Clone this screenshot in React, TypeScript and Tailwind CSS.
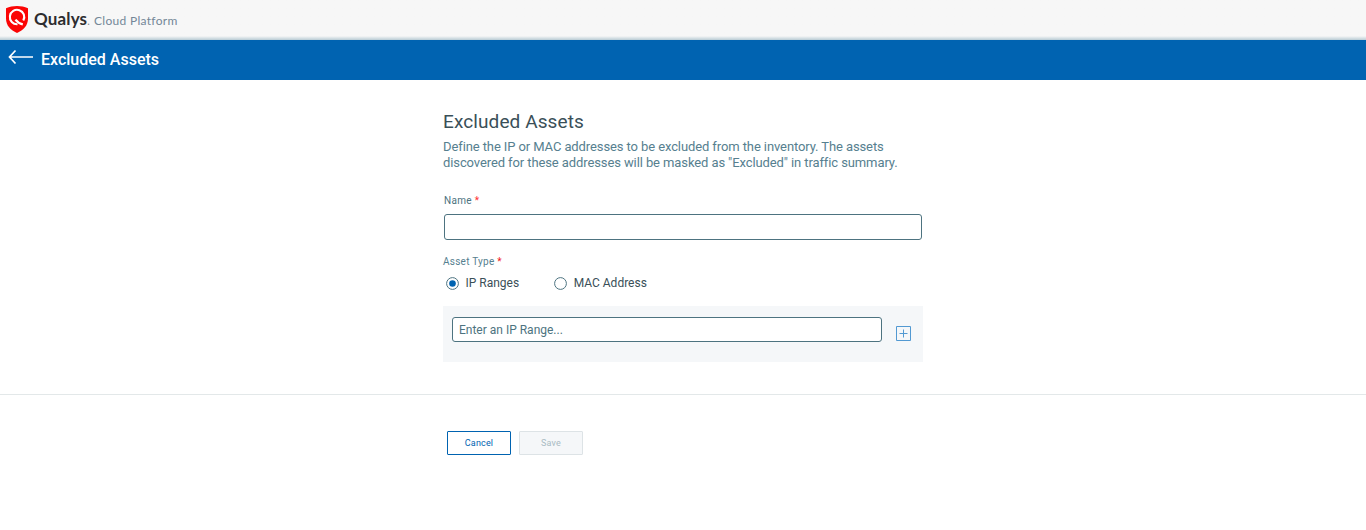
import { useState } from "react";

function QualysMark() {
  return (
    <svg width="24" height="28" viewBox="0 0 24 28" className="mt-px block" aria-hidden="true">
      <path
        d="M1 2.200C4.500 .7 8 0 12 0s7.500 .7 11 2.200V12.500c0 7-4.500 11.500-11 14.600C5.500 24 1 19.500 1 12.500Z"
        fill="#fb0505"
      />
      <path
        d="M12.500 18.200A7.200 7.200 0 1 1 18.300 14.600"
        fill="none"
        stroke="#fff"
        strokeWidth="2.100"
      />
      <path d="M10.500 13.700c1.500 2.200 3.700 3.900 7.300 4.600" fill="none" stroke="#fff" strokeWidth="2.300" />
    </svg>
  );
}

function Radio({ label, checked, onChange }: { label: string; checked: boolean; onChange: () => void }) {
  return (
    <label className="flex h-4 cursor-pointer items-center text-[12px] leading-4 text-[#3a4f58]">
      <input type="radio" name="asset-type" checked={checked} onChange={onChange} className="sr-only" />
      <svg width="13" height="13" viewBox="0 0 13 13" className="mt-px mr-[6.500px] block">
        <circle cx="6.5" cy="6.500" r="5.900" fill="#fff" stroke="#4d7380" />
        {checked && <circle cx="6.500" cy="6.500" r="3.300" fill="#0063b1" />}
      </svg>
      {label}
    </label>
  );
}

export default function App() {
  const [type, setType] = useState("ip");
  return (
    <div className="h-[530px] w-full overflow-hidden bg-white font-['Roboto',sans-serif]">
      <header className="flex h-10 items-start bg-linear-to-b from-[#f7f7f7] from-90% to-[#b9ccd5] pt-[5px] pl-[5px]">
        <QualysMark />
        <div className="ml-[5px] flex items-baseline leading-7">
          <span className="w-[53px] font-['Lato',sans-serif] text-[17px] leading-7 font-bold tracking-[0.15px] text-[#2d2d2f]">
            Qualys
          </span>
          <span className="w-[7px] text-[12px] text-[#8c8c8c]">.</span>
          <span className="font-['Lato',sans-serif] text-[12px] tracking-[0.3px] text-[#748798]">Cloud Platform</span>
        </div>
      </header>

      <div className="flex h-10 items-start bg-[#0063b1] pl-2 text-white">
        <button aria-label="Back" className="mt-[9px]">
          <svg width="25" height="16" viewBox="0 0 25 16" className="block" fill="none" stroke="#fff" strokeWidth="1.700">
            <path d="M7.500 1.500 1.500 8 7.500 14.500M1.500 8H25" />
          </svg>
        </button>
        <h1 className="ml-2 pt-[10px] text-[16px] leading-5 font-medium">Excluded Assets</h1>
      </div>

      <main className="ml-[443px] h-[314px] w-[480px] pt-[30px]">
        <h2 className="text-[19px] leading-6 tracking-[0.1px] text-[#3a4f58]">Excluded Assets</h2>
        <p className="mt-[5px] text-[13px] leading-4 tracking-[-0.1px] whitespace-nowrap text-[#56808f]">
          Define the IP or MAC addresses to be excluded from the inventory. The assets
          <br />
          discovered for these addresses will be masked as "Excluded" in traffic summary.
        </p>
        <label htmlFor="name" className="mt-6 ml-px block text-[10px] leading-3 tracking-[0.3px] text-[#4d7380]">
          Name <span className="text-[#ff3030]">*</span>
        </label>
        <input id="name" className="mt-[7px] ml-px block h-[26px] w-[478px] rounded-[3px] border border-[#4d7380] bg-white px-2 text-[12px] outline-none" />
        <div className="mt-4 text-[10px] leading-3 tracking-[0.25px] text-[#56808f]">
          Asset Type <span className="text-[#f02020]">*</span>
        </div>
        <div className="mt-[7px] ml-[3px] flex gap-[35px]">
          <Radio label="IP Ranges" checked={type === "ip"} onChange={() => setType("ip")} />
          <Radio label="MAC Address" checked={type === "mac"} onChange={() => setType("mac")} />
        </div>
        <div className="mt-[15px] flex h-14 bg-[#f5f7f9] pt-[11px] pl-[9px]">
          <input
            placeholder="Enter an IP Range..."
            className="h-[25px] w-[430px] rounded-[3px] border border-[#4d7380] bg-white px-[6px] text-[12px] outline-none placeholder:text-[#4d7380]"
          />
          <button aria-label="Add range" className="mt-[9px] ml-[14px] self-start">
            <svg width="15" height="15" viewBox="0 0 15 15" className="block" fill="none" stroke="#5299d2">
              <path d="M.5 .5h14v14H.500Z" />
              <path d="M7.500 3.500v8M3.500 7.500h8" />
            </svg>
          </button>
        </div>
      </main>

      <footer className="flex gap-2 border-t border-[#e3e8e9] pt-9 pl-[447px] text-[9px] tracking-[0.15px]">
        <button className="h-6 w-16 rounded-[1px] border border-[#0063b1] bg-white pt-px text-[#0063b1]">Cancel</button>
        <button disabled className="h-6 w-16 rounded-[1px] border border-[#dde3e6] bg-[#f5f7f9] pt-px text-[#a9bbc3]">
          Save
        </button>
      </footer>
    </div>
  );
}
